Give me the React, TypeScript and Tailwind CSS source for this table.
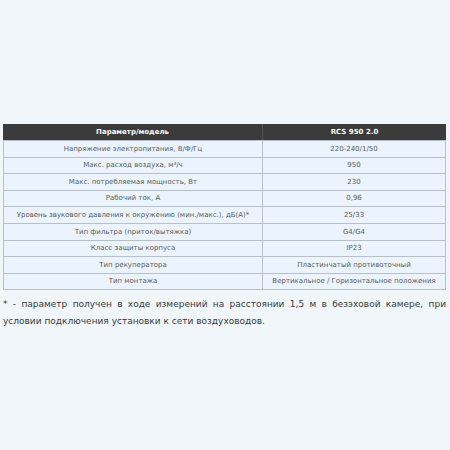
import React from "react";

const rows: [string, React.ReactNode][] = [
  ["Напряжение электропитания, В/Ф/Гц", "220-240/1/50"],
  ["Макс. расход воздуха, м³/ч", "950"],
  ["Макс. потребляемая мощность, Вт", "230"],
  ["Рабочий ток, А", "0,96"],
  ["Уровень звукового давления к окружению (мин./макс.), дБ(А)*", "25/33"],
  ["Тип фильтра (приток/вытяжка)", "G4/G4"],
  ["Класс защиты корпуса", "IP23"],
  ["Тип рекуператора", "Пластинчатый противоточный"],
  ["Тип монтажа", "Вертикальное / Горизонтальное положения"],
];

export default function App() {
  return (
    <div
      className="w-[450px] h-[450px] bg-[#f0f6fa] px-[3px] pt-[124px] overflow-hidden"
      style={{ fontFamily: '"DejaVu Sans", Verdana, sans-serif' }}
    >
      <div className="w-[443px] border border-[#b9bfc6] border-t-0">
        <div className="grid grid-cols-[260px_1fr] h-[16px] bg-[#3b3b3b] text-white font-bold text-[7px] -mx-px">
          <div className="flex items-center justify-center border-r border-[#555]">Параметр/модель</div>
          <div className="flex items-center justify-center">RCS 950 2.0</div>
        </div>
        {rows.map(([a, b], i) => (
          <div
            key={i}
            className="grid grid-cols-[259px_1fr] h-[16.6px] bg-[#ebf4fc] text-[#5a5a5a] text-[7px] border-t border-[#b9bfc6] first:border-t-0"
          >
            <div className="flex items-center justify-center border-r border-[#b9bfc6] whitespace-nowrap">{a}</div>
            <div className="flex items-center justify-center whitespace-nowrap">{b}</div>
          </div>
        ))}
      </div>
      <p className="mt-[6px] w-[443px] text-[9px] leading-[17px] text-[#3a3a3a] text-justify">
        * - параметр получен в ходе измерений на расстоянии 1,5 м в безэховой камере, при условии подключения установки к сети воздуховодов.
      </p>
    </div>
  );
}
